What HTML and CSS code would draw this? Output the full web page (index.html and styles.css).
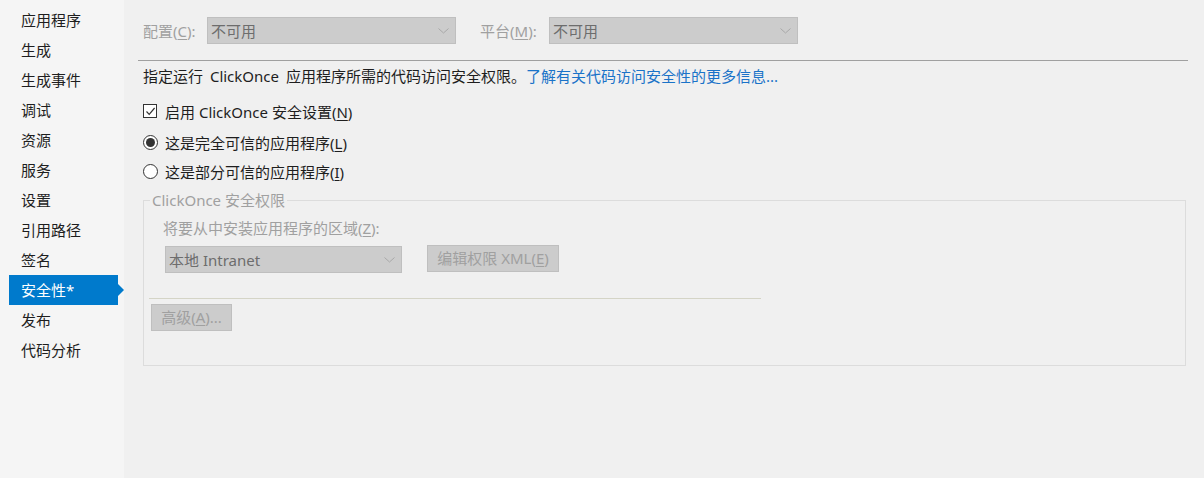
FILE: index.html
```html
<!DOCTYPE html>
<html lang="zh-CN">
<head>
<meta charset="utf-8">
<title>安全性</title>
<link rel="stylesheet" href="styles.css">
</head>
<body>
<div class="app">
  <nav class="sidebar">
    <div class="nav-item">应用程序</div>
    <div class="nav-item">生成</div>
    <div class="nav-item">生成事件</div>
    <div class="nav-item">调试</div>
    <div class="nav-item">资源</div>
    <div class="nav-item">服务</div>
    <div class="nav-item">设置</div>
    <div class="nav-item">引用路径</div>
    <div class="nav-item">签名</div>
    <div class="nav-item active">安全性*</div>
    <div class="nav-item">发布</div>
    <div class="nav-item">代码分析</div>
  </nav>
  <main class="main">
    <div class="toprow">
      <span class="toplabel lbl-config">配置(<u>C</u>):</span>
      <div class="select select-top">
        <span>不可用</span>
        <svg class="chev" width="11" height="6" viewBox="0 0 11 6"><polyline points="0.5,0.5 5.5,5 10.5,0.5" fill="none" stroke="#a8a8a8" stroke-width="1"/></svg>
      </div>
      <span class="toplabel lbl-platform">平台(<u>M</u>):</span>
      <div class="select select-top">
        <span>不可用</span>
        <svg class="chev" width="11" height="6" viewBox="0 0 11 6"><polyline points="0.5,0.5 5.5,5 10.5,0.5" fill="none" stroke="#a8a8a8" stroke-width="1"/></svg>
      </div>
    </div>
    <div class="separator"></div>
    <div class="content">
      <p class="desc">指定运行 ClickOnce 应用程序所需的代码访问安全权限。<a class="link" href="#">了解有关代码访问安全性的更多信息...</a></p>
      <div class="check-row">
        <span class="checkbox">
          <svg width="11" height="11" viewBox="0 0 11 11"><polyline points="1.5,5.5 4.2,8.3 9.6,2" fill="none" stroke="#333" stroke-width="1.2"/></svg>
        </span>
        <span>启用 ClickOnce 安全设置(<u>N</u>)</span>
      </div>
      <div class="radio-row first">
        <span class="radio checked"></span>
        <span>这是完全可信的应用程序(<u>L</u>)</span>
      </div>
      <div class="radio-row">
        <span class="radio"></span>
        <span>这是部分可信的应用程序(<u>I</u>)</span>
      </div>
      <fieldset class="group">
        <legend class="group-title">ClickOnce 安全权限</legend>
        <div class="group-body">
          <div class="zone-label">将要从中安装应用程序的区域(<u>Z</u>):</div>
          <div class="zone-row">
            <div class="select select-zone">
              <span>本地 Intranet</span>
              <svg class="chev" width="11" height="6" viewBox="0 0 11 6"><polyline points="0.5,0.5 5.5,5 10.5,0.5" fill="none" stroke="#a8a8a8" stroke-width="1"/></svg>
            </div>
            <div class="button btn-xml">编辑权限 XML(<u>E</u>)</div>
          </div>
          <div class="inner-line"></div>
          <div class="button btn-adv">高级(<u>A</u>)...</div>
        </div>
      </fieldset>
    </div>
  </main>
</div>
</body>
</html>
```
FILE: styles.css
```css
* { box-sizing: border-box; }
html, body {
  margin: 0;
  padding: 0;
  width: 1204px;
  height: 478px;
  overflow: hidden;
  background: #f0f0f0;
  font-family: "Noto Sans", "Noto Sans CJK SC", sans-serif;
  font-size: 15px;
  color: #1e1e1e;
}
u { text-decoration: underline; text-underline-offset: 2px; }

.app {
  display: flex;
  height: 478px;
}

.sidebar {
  width: 124px;
  flex: none;
  background: #f5f5f5;
  padding-top: 5px;
}
.nav-item {
  position: relative;
  height: 30px;
  line-height: 30px;
  margin-left: 9px;
  width: 109px;
  padding-left: 12px;
  color: #1e1e1e;
  white-space: nowrap;
}
.nav-item.active {
  background: #007acc;
  color: #fff;
}
.nav-item.active::after {
  content: "";
  position: absolute;
  right: -6px;
  top: 9px;
  border-left: 6px solid #007acc;
  border-top: 6px solid transparent;
  border-bottom: 6px solid transparent;
}

.main {
  flex: 1;
  padding: 17px 16px 0 14px;
}

.toprow {
  display: flex;
  align-items: center;
  height: 27px;
  padding-left: 5px;
}
.toplabel {
  color: #a0a0a0;
  white-space: nowrap;
}
.lbl-config { width: 64px; }
.lbl-platform { width: 69px; margin-left: 24px; }

.select {
  display: flex;
  align-items: center;
  justify-content: space-between;
  background: #cccccc;
  border: 1px solid #bfbfbf;
  color: #6d6d6d;
  padding: 0 6px 0 3px;
  height: 27px;
  white-space: nowrap;
}
.select-top { width: 249px; }
.chev { flex: none; }

.separator {
  height: 1px;
  background: #a0a0a0;
  margin-top: 16px;
}

.content { padding-left: 5px; }

.desc {
  margin: 0;
  height: 30px;
  line-height: 30px;
  white-space: nowrap;
  font-size: 15px;
  word-spacing: 3px;
}
.link { color: #1a73c8; text-decoration: none; }

.check-row, .radio-row {
  display: flex;
  align-items: center;
  white-space: nowrap;
}
.check-row { height: 30px; margin-top: 5px; }
.radio-row { height: 29px; }
.radio-row.first { margin-top: 2px; }

.checkbox {
  width: 14px;
  height: 14px;
  border: 1px solid #333;
  background: #fff;
  margin-right: 8px;
  display: flex;
  align-items: center;
  justify-content: center;
}
.radio {
  width: 15px;
  height: 15px;
  border: 1px solid #333;
  border-radius: 50%;
  background: #fff;
  margin-right: 7px;
  display: flex;
  align-items: center;
  justify-content: center;
}
.radio.checked::before {
  content: "";
  width: 9px;
  height: 9px;
  border-radius: 50%;
  background: #333;
}

.group {
  margin: 4px 0 0 0;
  padding: 0;
  width: 1043px;
  border: 1px solid #dcdcdc;
  min-width: 0;
}
.group-title {
  margin-left: 6px;
  padding: 0 2px;
  line-height: 20px;
  color: #a0a0a0;
}
.group-body {
  padding: 8px 0 34px 5px;
}
.zone-label {
  margin-left: 14px;
  line-height: 20px;
  color: #a0a0a0;
  white-space: nowrap;
}
.zone-row {
  display: flex;
  align-items: flex-start;
  margin-top: 7px;
  margin-left: 16px;
}
.select-zone {
  width: 237px;
  margin-top: 1px;
}
.button {
  height: 27px;
  line-height: 25px;
  background: #cccccc;
  border: 1px solid #bfbfbf;
  color: #a0a0a0;
  white-space: nowrap;
  text-align: center;
}
.btn-xml { width: 132px; margin-left: 25px; }
.inner-line {
  width: 612px;
  height: 1px;
  background: #d4d4c6;
  margin-top: 25px;
}
.btn-adv {
  width: 81px;
  margin-left: 2px;
  margin-top: 5px;
}
```
